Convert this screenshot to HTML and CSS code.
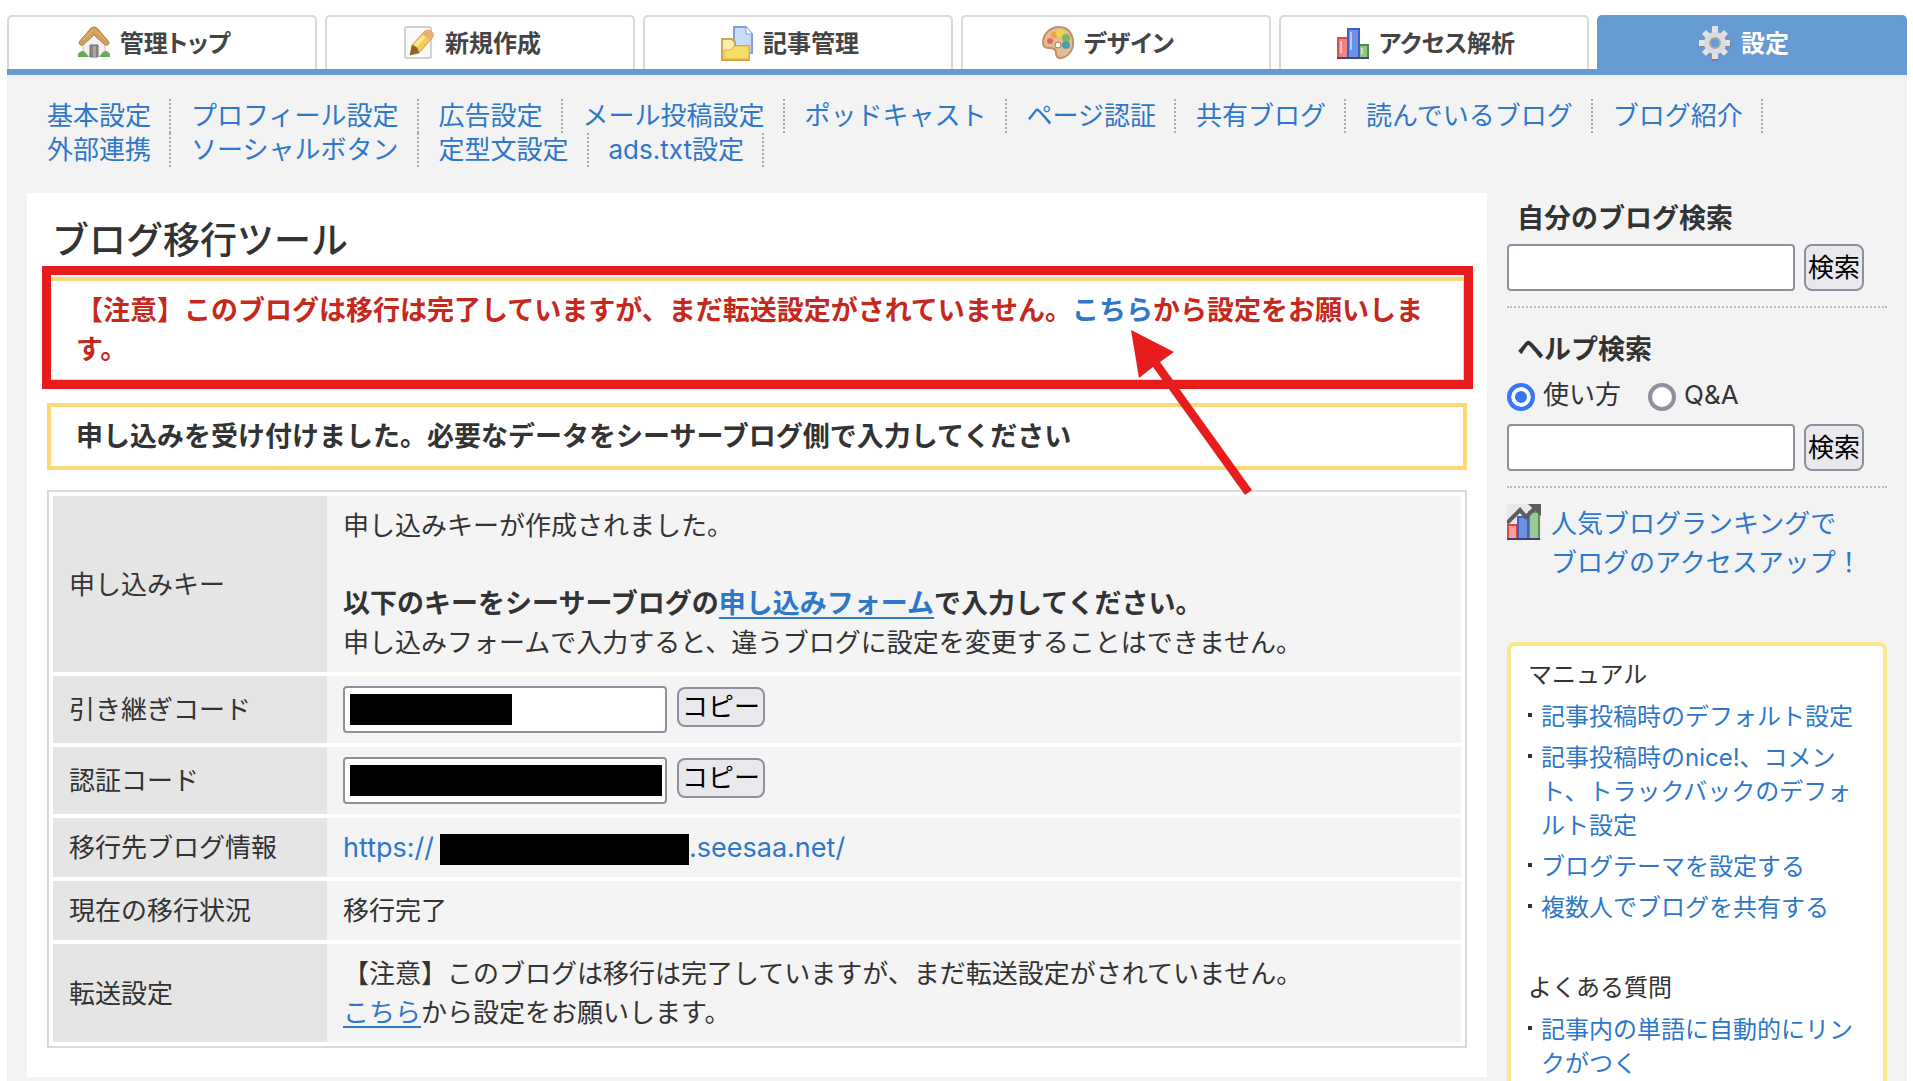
FILE: index.html
```
<!DOCTYPE html>
<html lang="ja">
<head>
    <meta charset="UTF-8">
    <meta name="viewport" content="width=device-width, initial-scale=1.0">
    <title>ブログ移行ツール</title>
    <link rel="stylesheet" href="styles.css">
</head>
<body>
    <div class="page">
        <nav class="tabs">
            <a class="tab" href="#">
                <svg class="tab-icon" viewBox="0 0 32 36" aria-hidden="true">
                    <path d="M5 17 L16 6 L27 17 V31 H5 Z" fill="#f3f1ee" stroke="#c9c3bb"/>
                    <path d="M0 32 V29 Q3 24 7 27 L11 32 Z M32 32 V29 Q29 24 25 27 L21 32 Z" fill="#6aab58"/>
                    <path d="M12 20 H20 V32 H12 Z" fill="#8a8683" stroke="#77736f"/>
                    <path d="M15 21 H18 V32 H15 Z" fill="#aaa6a2"/>
                    <path d="M1 17 L13 3 Q16 1 19 3 L31 17 Q31 21 27 20 L16 10 L5 20 Q1 21 1 17 Z" fill="#cfa15c" stroke="#b28244"/>
                    <path d="M5 15 L15 5 M17 5 L27 15" stroke="#e0bb7c" fill="none"/>
                </svg>
                <span>管理トップ</span>
            </a>
            <a class="tab" href="#">
                <svg class="tab-icon" viewBox="0 0 32 36" aria-hidden="true">
                    <rect x="2" y="2" width="26" height="31" rx="2" fill="#fafafa" stroke="#d2d2d2" stroke-width="2"/>
                    <path d="M7 30 L9 20 L22 6 Q25 4 28 6 Q31 8 30 12 L16 28 Z" fill="#f3cb55" stroke="#cf9a40"/>
                    <path d="M12 21 L23 9" stroke="#fbe68f" stroke-width="4"/>
                    <path d="M22 6 Q25 4 28 6 Q31 8 30 12 L27 15 L19 9 Z" fill="#e9b070"/>
                    <path d="M7 30 L9 20 Q15 21 16 28 Z" fill="#8a6137"/>
                </svg>
                <span>新規作成</span>
            </a>
            <a class="tab" href="#">
                <svg class="tab-icon" viewBox="0 0 32 36" aria-hidden="true">
                    <path d="M13 2 H25 L31 9 V28 H13 Z" fill="#c9dcf8" stroke="#7f9fdd" stroke-width="2"/>
                    <path d="M25 2 V9 H31" fill="#fff" stroke="#7f9fdd"/>
                    <path d="M1 14 H11 L14 17 V21 H28 V35 H1 Z" fill="#fbeeb3" stroke="#d6a348" stroke-width="2"/>
                    <path d="M3 25 H10 L13 21 H28 V34 H3 Z" fill="#f7de68" stroke="#dfb14c"/>
                </svg>
                <span>記事管理</span>
            </a>
            <a class="tab" href="#">
                <svg class="tab-icon" viewBox="0 0 32 36" aria-hidden="true">
                    <path d="M17 2 C28 2 32 12 31 20 C30 28 23 34 17 33 C12 32 16 26 12 24 C8 22 1 25 1 18 C1 9 8 2 17 2 Z" fill="#e3bd95" stroke="#bd9068" stroke-width="2"/>
                    <circle cx="8" cy="16" r="3" fill="#e8675c"/>
                    <circle cx="12" cy="10" r="3" fill="#f2a04b"/>
                    <circle cx="18" cy="8" r="4" fill="#f5d34d"/>
                    <circle cx="24" cy="13" r="4" fill="#82b85a"/>
                    <circle cx="24" cy="20" r="4" fill="#4e9dad"/>
                    <circle cx="16" cy="20" r="3" fill="#fff" stroke="#a97645"/>
                </svg>
                <span>デザイン</span>
            </a>
            <a class="tab" href="#">
                <svg class="tab-icon" viewBox="0 0 32 36" aria-hidden="true">
                    <rect x="1" y="13" width="10" height="20" fill="#ee8580" stroke="#d8504d" stroke-width="2"/>
                    <rect x="22" y="20" width="9" height="13" fill="#8fc487" stroke="#4b8f46" stroke-width="2"/>
                    <rect x="11" y="4" width="11" height="29" fill="#6d92e6" stroke="#3c5fc4" stroke-width="2"/>
                    <path d="M14 7 V25 M4 16 V28 M25 23 V29" stroke="#fff" stroke-opacity="0.5" stroke-width="2"/>
                    <path d="M0 33 H32" stroke="#4b4470" stroke-width="2"/>
                </svg>
                <span>アクセス解析</span>
            </a>
            <a class="tab tab-active" href="#">
                <svg class="tab-icon" viewBox="0 0 32 36" aria-hidden="true">
                    <g stroke="#777" stroke-opacity="0.6" stroke-width="6">
                        <path d="M16 4 V36 M1 19 H32 M6 8 L27 30 M27 8 L6 30"/>
                    </g>
                    <g stroke="#e3e3e3" stroke-width="6">
                        <path d="M16 1 V34 M0 18 H31 M5 7 L27 29 M27 7 L5 29"/>
                    </g>
                    <circle cx="16" cy="18" r="11" fill="#dcdcdc"/>
                    <circle cx="16" cy="18" r="5" fill="#659ad2" stroke="#a9a9a9" stroke-width="2"/>
                </svg>
                <span>設定</span>
            </a>
        </nav>

        <div class="body-area">
            <ul class="submenu">
                <li><a href="#">基本設定</a></li>
                <li><a href="#">プロフィール設定</a></li>
                <li><a href="#">広告設定</a></li>
                <li><a href="#">メール投稿設定</a></li>
                <li><a href="#">ポッドキャスト</a></li>
                <li><a href="#">ページ認証</a></li>
                <li><a href="#">共有ブログ</a></li>
                <li><a href="#">読んでいるブログ</a></li>
                <li><a href="#">ブログ紹介</a></li>
                <li><a href="#">外部連携</a></li>
                <li><a href="#">ソーシャルボタン</a></li>
                <li><a href="#">定型文設定</a></li>
                <li><a href="#">ads.txt設定</a></li>
            </ul>

            <div class="columns">
                <main class="main">
                    <h1>ブログ移行ツール</h1>

                    <div class="notice notice-alert">
                        【注意】このブログは移行は完了していますが、まだ転送設定がされていません。<a href="#">こちら</a>から設定をお願いします。
                        <div class="frame"></div>
                        <svg class="arrow" viewBox="0 0 122 166" aria-hidden="true">
                            <polygon points="0,0 43,22 29,32 121,160 114,165 22,37 8,48" fill="#e71c1c"/>
                        </svg>
                    </div>

                    <div class="notice">申し込みを受け付けました。必要なデータをシーサーブログ側で入力してください</div>

                    <table class="info">
                        <tr>
                            <th scope="row">申し込みキー</th>
                            <td>
                                申し込みキーが作成されました。<br>
                                <br>
                                <strong>以下のキーをシーサーブログの<a href="#">申し込みフォーム</a>で入力してください。</strong><br>
                                申し込みフォームで入力すると、違うブログに設定を変更することはできません。
                            </td>
                        </tr>
                        <tr>
                            <th scope="row"><label for="takeover-code">引き継ぎコード</label></th>
                            <td>
                                <div class="copy-row">
                                    <input type="text" id="takeover-code" readonly>
                                    <span class="mask mask-short"></span>
                                    <button type="button">コピー</button>
                                </div>
                            </td>
                        </tr>
                        <tr>
                            <th scope="row"><label for="auth-code">認証コード</label></th>
                            <td>
                                <div class="copy-row">
                                    <input type="text" id="auth-code" readonly>
                                    <span class="mask mask-long"></span>
                                    <button type="button">コピー</button>
                                </div>
                            </td>
                        </tr>
                        <tr>
                            <th scope="row">移行先ブログ情報</th>
                            <td><a class="blog-url" href="#">https://<span class="mask-url"></span>.seesaa.net/</a></td>
                        </tr>
                        <tr>
                            <th scope="row">現在の移行状況</th>
                            <td>移行完了</td>
                        </tr>
                        <tr>
                            <th scope="row">転送設定</th>
                            <td>
                                【注意】このブログは移行は完了していますが、まだ転送設定がされていません。<br>
                                <a href="#">こちら</a>から設定をお願いします。
                            </td>
                        </tr>
                    </table>
                </main>

                <aside class="side">
                    <form class="search">
                        <h2><label for="blog-search">自分のブログ検索</label></h2>
                        <div class="search-row">
                            <input type="text" id="blog-search">
                            <button type="button">検索</button>
                        </div>
                    </form>

                    <form class="search search-help">
                        <h2><label for="help-search">ヘルプ検索</label></h2>
                        <div class="radios">
                            <label><input type="radio" name="type" checked>使い方</label>
                            <label><input type="radio" name="type">Q&amp;A</label>
                        </div>
                        <div class="search-row">
                            <input type="text" id="help-search">
                            <button type="button">検索</button>
                        </div>
                    </form>

                    <a class="ranking" href="#">
                        <svg class="ranking-icon" viewBox="0 0 34 36" aria-hidden="true">
                            <rect width="34" height="36" fill="#e8e8e8"/>
                            <rect x="1" y="21" width="9" height="14" fill="#f4a09c" stroke="#e0453f" stroke-width="2"/>
                            <rect x="22" y="8" width="10" height="27" fill="#9bc994" stroke="#5c9656" stroke-width="2"/>
                            <rect x="11" y="13" width="10" height="22" fill="#6d92e0" stroke="#3b62bd" stroke-width="2"/>
                            <path d="M0 35 H33" stroke="#453d72" stroke-width="2"/>
                            <path d="M0 19 L13 6 L19 13 L28 4" fill="none" stroke="#5d5d5d" stroke-width="4"/>
                            <path d="M21 0 H34 V12 Z" fill="#5d5d5d"/>
                        </svg>
                        <span>人気ブログランキングで<br>ブログのアクセスアップ！</span>
                    </a>

                    <div class="manual">
                        <h3>マニュアル</h3>
                        <ul>
                            <li><a href="#">記事投稿時のデフォルト設定</a></li>
                            <li><a href="#">記事投稿時のnice!、コメント、トラックバックのデフォルト設定</a></li>
                            <li><a href="#">ブログテーマを設定する</a></li>
                            <li><a href="#">複数人でブログを共有する</a></li>
                        </ul>
                        <h3>よくある質問</h3>
                        <ul>
                            <li><a href="#">記事内の単語に自動的にリンクがつく</a></li>
                        </ul>
                    </div>
                </aside>
            </div>
        </div>
    </div>
</body>
</html>
```

FILE: styles.css
```
* {
    box-sizing: border-box;
}
body {
    margin: 0;
    height: 100vh;
    overflow: hidden;
    background-color: #fff;
    color: #333;
    font-family: Inter, "Noto Sans CJK JP", sans-serif;
    font-size: 26px;
    line-height: 39px;
}
a {
    color: #2f77c9;
    text-decoration: none;
}
h1, h2, h3, ul {
    margin: 0;
    padding: 0;
}
ul {
    list-style: none;
}
input, button {
    font-family: inherit;
    font-size: 26px;
    border: 2px solid #8f8f9d;
}
input[type="text"] {
    background-color: #fff;
    border-radius: 4px;
    padding: 0 6px;
    height: 47px;
}
button {
    background-color: #e9e9ed;
    color: #000;
    border-radius: 8px;
    padding: 0 2px;
    line-height: 36px;
    white-space: nowrap;
}
.page {
    padding: 15px 6px 0 7px;
}

/* tabs */
.tabs {
    display: grid;
    grid-template-columns: repeat(6, 1fr);
    gap: 8px;
    border-bottom: 6px solid #659ad2;
}
.tab {
    display: flex;
    align-items: center;
    justify-content: center;
    gap: 10px;
    height: 54px;
    padding-right: 16px;
    border: 2px solid #dadada;
    border-bottom: 0;
    border-radius: 5px 5px 0 0;
    background-color: #fff;
    color: #444;
    font-size: 24px;
    font-weight: bold;
    font-feature-settings: "palt";
}
.tab-active {
    background-color: #659ad2;
    border-color: #659ad2;
    color: #fff;
}
.tab-icon {
    width: 32px;
    height: 36px;
}

/* submenu */
.body-area {
    background-color: #f3f3f3;
    padding: 24px 20px 40px;
}
.submenu {
    display: flex;
    flex-wrap: wrap;
    padding: 0 80px 0 20px;
    line-height: 34px;
}
.submenu li {
    padding-right: 18px;
    margin-right: 20px;
    border-right: 2px dotted #aaa;
    height: 34px;
}

/* main column */
.columns {
    display: flex;
    align-items: flex-start;
    gap: 20px;
    margin-top: 26px;
}
.main {
    flex: 1;
    background-color: #fff;
    padding: 20px 20px 29px;
}
h1 {
    font-size: 37px;
    font-weight: 500;
    line-height: 56px;
    padding: 0 5px;
    margin-bottom: 8px;
}
.notice {
    position: relative;
    border: 4px solid #fad976;
    padding: 10px 25px;
    margin-bottom: 20px;
    font-size: 27px;
    font-weight: bold;
}
.notice-alert {
    color: #c5281c;
}
.frame {
    position: absolute;
    top: -15px;
    left: -9px;
    right: -10px;
    bottom: -10px;
    border: 9px solid #e71c1c;
}
.arrow {
    position: absolute;
    top: 49px;
    left: 1080px;
    width: 122px;
    height: 166px;
    z-index: 1;
}
.info {
    width: 100%;
    border: 2px solid #dadada;
    border-spacing: 0 4px;
    padding: 0 4px;
}
.info th {
    width: 274px;
    background-color: #e5e5e5;
    padding: 10px 16px;
    font-weight: normal;
    text-align: left;
}
.info td {
    background-color: #f4f4f4;
    padding: 10px 16px;
}
.info td a {
    text-decoration: underline;
    text-decoration-thickness: 2px;
    text-underline-offset: 4px;
}
.info td .blog-url {
    font-size: 27px;
    text-decoration: none;
}
.info strong {
    font-size: 27px;
}
.copy-row {
    position: relative;
    display: flex;
    align-items: flex-start;
    gap: 10px;
}
.copy-row input {
    width: 324px;
}
.copy-row button {
    width: 88px;
    height: 40px;
    margin-top: 1px;
}
.mask {
    position: absolute;
    top: 8px;
    left: 7px;
    height: 31px;
    background-color: #000;
}
.mask-short {
    width: 162px;
}
.mask-long {
    width: 312px;
}
.mask-url {
    display: inline-block;
    width: 249px;
    height: 31px;
    margin-left: 6px;
    background-color: #000;
    vertical-align: middle;
}

/* sidebar */
.side {
    width: 380px;
}
.search {
    padding: 6px 0 15px;
    border-bottom: 2px dotted #bbb;
}
.search h2 {
    font-size: 27px;
    line-height: 39px;
    padding: 0 10px;
    margin-bottom: 6px;
}
.search-help {
    padding-top: 22px;
}
.search-help h2 {
    margin-bottom: 6px;
}
.search-row {
    display: flex;
    gap: 9px;
}
.search-row input {
    width: 288px;
}
.search-row button {
    width: 60px;
}
.radios {
    display: flex;
    gap: 27px;
    margin-bottom: 10px;
}
.radios label {
    display: flex;
    align-items: center;
    gap: 8px;
}
.radios input {
    appearance: none;
    width: 28px;
    height: 28px;
    margin: 5px 0 0;
    border: 4px solid #8f8f9d;
    border-radius: 50%;
    background-color: #fff;
}
.radios input:checked {
    border-color: #3478f6;
    background-color: #3478f6;
    box-shadow: inset 0 0 0 4px #fff;
}
.ranking {
    display: flex;
    align-items: flex-start;
    gap: 10px;
    margin-top: 16px;
}
.ranking-icon {
    width: 34px;
    height: 36px;
}
.manual {
    margin-top: 60px;
    padding: 12px 25px 30px 17px;
    border: 4px solid #fbe78c;
    border-radius: 8px;
    background-color: #fff;
    font-size: 24px;
    line-height: 34px;
}
.manual h3 {
    font-size: 24px;
    font-weight: normal;
    margin-bottom: 8px;
}
.manual ul {
    margin-bottom: 46px;
}
.manual li {
    position: relative;
    padding-left: 13px;
    margin-bottom: 7px;
}
.manual li::before {
    content: "";
    position: absolute;
    top: 13px;
    left: 0;
    width: 4px;
    height: 4px;
    background-color: #333;
}
```
